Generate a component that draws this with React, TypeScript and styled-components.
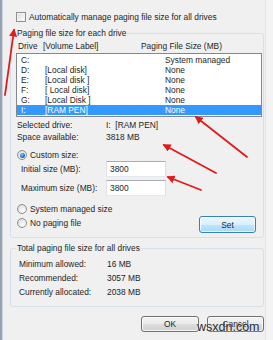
import React from "react";
import styled, { createGlobalStyle, css } from "styled-components";

const Global = createGlobalStyle`
  html, body { margin: 0; padding: 0; background: #f0f0f0; }
  * { box-sizing: border-box; }
`;

const Window = styled.div`
  position: relative;
  width: 273px;
  height: 340px;
  overflow: hidden;
  background: #f0f0f0;
  box-shadow: inset 2px 0 0 #97a3b3, inset 3px 0 0 #cdd5de, inset -7px 0 0 #f3f3f3, inset -8px 0 0 #dfe3e8;
  font-family: "Liberation Sans", Arial, sans-serif;
  font-size: 8.4px;
  line-height: 10px;
  color: #1e1e1e;
  display: flex;
  flex-direction: column;
`;

const CheckRow = styled.div`
  display: flex;
  align-items: center;
  gap: 3px;
  height: 10px;
  margin: 12px 0 0 16px;
`;

const CheckBox = styled.span`
  width: 10px;
  height: 10px;
  border: 1px solid #8e8f8f;
  background: linear-gradient(135deg, #d8d8d8 0%, #f4f4f4 70%, #ffffff 100%);
  box-shadow: inset 0 0 0 1px #f4f4f4;
`;

const Group = styled.fieldset<{ $mt: number; $pt: number; $pb: number }>`
  margin: ${(p) => p.$mt}px 0 0 10px;
  width: 254px;
  padding: ${(p) => p.$pt}px 1px ${(p) => p.$pb}px 5px;
  border: 1px solid #d5dfe5;
  border-radius: 3px;
  min-width: 0;
`;

const Legend = styled.legend`
  padding: 0 1px;
  height: 10px;
  line-height: 10px;
`;

const Header = styled.div`
  display: grid;
  grid-template-columns: 25px 98px 1fr;
  height: 10px;
  padding-left: 2px;
`;

const ListBox = styled.div`
  margin-top: 2px;
  height: 64px;
  border: 1px solid #828790;
  background: #ffffff;
  padding: 1px 0;
`;

const ListRow = styled.div<{ $selected?: boolean }>`
  display: grid;
  grid-template-columns: 24px 120px 1fr;
  height: 10px;
  padding-left: 4px;
  white-space: pre;
  ${(p) =>
    p.$selected &&
    css`
      background: #3399ff;
      color: #ffffff;
    `}
`;

const InfoGrid = styled.div<{ $mt: number; $label: number; $gap: number; $pl: number }>`
  display: grid;
  grid-template-columns: ${(p) => p.$label}px 1fr;
  row-gap: ${(p) => p.$gap}px;
  grid-auto-rows: 10px;
  margin-top: ${(p) => p.$mt}px;
  padding-left: ${(p) => p.$pl}px;
  white-space: pre;
`;

const RadioRow = styled.div<{ $mt?: number }>`
  display: flex;
  align-items: center;
  gap: 3px;
  height: 10px;
  margin-top: ${(p) => p.$mt ?? 0}px;
  padding-left: 1px;
`;

const Radio = styled.span<{ $checked?: boolean }>`
  position: relative;
  width: 10px;
  height: 10px;
  border-radius: 50%;
  border: 1px solid #8e8f8f;
  background: radial-gradient(circle at 65% 70%, #ffffff 0%, #e8e8e8 55%, #cfcfcf 100%);
  ${(p) =>
    p.$checked &&
    css`
      &::after {
        content: "";
        position: absolute;
        left: 1.5px;
        top: 1.5px;
        width: 5px;
        height: 5px;
        border-radius: 50%;
        background: radial-gradient(circle at 40% 35%, #8fd0ff 0%, #2a7fcf 45%, #0f3e78 100%);
      }
    `}
`;

const SizeRow = styled.div<{ $mt: number }>`
  display: grid;
  grid-template-columns: 85px 60px;
  align-items: center;
  height: 16px;
  margin-top: ${(p) => p.$mt}px;
  padding-left: 5px;
`;

const TextInput = styled.div`
  height: 16px;
  border: 1px solid;
  border-color: #abadb3 #dbdfe6 #e3e9ef #e2e3ea;
  background: #ffffff;
  padding: 2px 0 0 3px;
`;

const BottomRow = styled.div`
  display: flex;
  justify-content: space-between;
  margin-top: 8px;
  padding-right: 6px;
`;

const RadioColumn = styled.div`
  display: flex;
  flex-direction: column;
  gap: 4px;
`;

const Button = styled.div<{ $w: number; $h: number; $default?: boolean; $mt?: number }>`
  width: ${(p) => p.$w}px;
  height: ${(p) => p.$h}px;
  margin-top: ${(p) => p.$mt ?? 0}px;
  display: flex;
  align-items: center;
  justify-content: center;
  border: 1px solid #707070;
  border-radius: 3px;
  background: linear-gradient(#f2f2f2 0%, #ebebeb 50%, #dddddd 51%, #cfcfcf 100%);
  box-shadow: inset 0 0 0 1px rgba(255, 255, 255, 0.8);
  ${(p) =>
    p.$default &&
    css`
      border-color: #3c7fb1;
      background: linear-gradient(#eaf6fd 0%, #d9f0fc 50%, #bee6fd 51%, #a7d9f5 100%);
      box-shadow: inset 0 0 0 1px rgba(255, 255, 255, 0.7);
    `}
`;

const ButtonBar = styled.div`
  display: flex;
  justify-content: flex-end;
  gap: 8px;
  margin-top: 9px;
  padding-right: 9px;
`;

const Watermark = styled.div`
  position: absolute;
  left: 197px;
  top: 320px;
  font-family: "Liberation Sans", Arial, sans-serif;
  font-size: 12.5px;
  line-height: 14px;
  color: #2b2b2b;
  text-shadow: 0 0 2px #ffffff;
`;

const Annotations = styled.svg`
  position: absolute;
  left: 0;
  top: 0;
  pointer-events: none;
`;

const drives: [string, string, string][] = [
  ["C:", "", "System managed"],
  ["D:", "[Local disk]", "None"],
  ["E:", "[Local disk ]", "None"],
  ["F:", "[ Local disk]", "None"],
  ["G:", "[Local Disk ]", "None"],
  ["I:", "[RAM PEN]", "None"],
];

const arrows: [number, number, number, number][] = [
  [5, 95, 14, 30],
  [247, 157, 196, 117],
  [216, 173, 164, 145],
  [201, 190, 168, 177],
];

export default function App() {
  return (
    <>
      <Global />
      <Window>
        <CheckRow>
          <CheckBox />
          <span>Automatically manage paging file size for all drives</span>
        </CheckRow>

        <Group $mt={6} $pt={3} $pb={4}>
          <Legend>Paging file size for each drive</Legend>
          <Header>
            <span>Drive</span>
            <span>[Volume Label]</span>
            <span>Paging File Size (MB)</span>
          </Header>
          <ListBox>
            {drives.map(([d, l, s], i) => (
              <ListRow key={d} $selected={i === drives.length - 1}>
                <span>{d}</span>
                <span>{l}</span>
                <span>{s}</span>
              </ListRow>
            ))}
          </ListBox>
          <InfoGrid $mt={3} $label={89} $gap={2} $pl={1}>
            <span>Selected drive:</span>
            <span>I:  [RAM PEN]</span>
            <span>Space available:</span>
            <span>3818 MB</span>
          </InfoGrid>
          <RadioRow $mt={8}>
            <Radio $checked />
            <span>Custom size:</span>
          </RadioRow>
          <SizeRow $mt={1}>
            <span>Initial size (MB):</span>
            <TextInput>3800</TextInput>
          </SizeRow>
          <SizeRow $mt={3}>
            <span>Maximum size (MB):</span>
            <TextInput>3800</TextInput>
          </SizeRow>
          <BottomRow>
            <RadioColumn>
              <RadioRow>
                <Radio />
                <span>System managed size</span>
              </RadioRow>
              <RadioRow>
                <Radio />
                <span>No paging file</span>
              </RadioRow>
            </RadioColumn>
            <Button $w={57} $h={17} $mt={12} $default>
              Set
            </Button>
          </BottomRow>
        </Group>

        <Group $mt={5} $pt={6} $pb={9}>
          <Legend>Total paging file size for all drives</Legend>
          <InfoGrid $mt={0} $label={88} $gap={4} $pl={3}>
            <span>Minimum allowed:</span>
            <span>16 MB</span>
            <span>Recommended:</span>
            <span>3057 MB</span>
            <span>Currently allocated:</span>
            <span>2038 MB</span>
          </InfoGrid>
        </Group>

        <ButtonBar>
          <Button $w={58} $h={16}>OK</Button>
          <Button $w={57} $h={16}>Cancel</Button>
        </ButtonBar>

        <Watermark>wsxdn.com</Watermark>

        <Annotations width={273} height={340} viewBox="0 0 273 340">
          <defs>
            <marker id="head" viewBox="0 0 10 10" refX="8" refY="5" markerWidth="4.5" markerHeight="4.5" orient="auto">
              <path d="M0 0 L10 5 L0 10 Z" fill="#e3191a" />
            </marker>
          </defs>
          {arrows.map(([x1, y1, x2, y2], i) => (
            <line
              key={i}
              x1={x1}
              y1={y1}
              x2={x2}
              y2={y2}
              stroke="#e3191a"
              strokeWidth={1.8}
              strokeLinecap="round"
              markerEnd="url(#head)"
            />
          ))}
        </Annotations>
      </Window>
    </>
  );
}
